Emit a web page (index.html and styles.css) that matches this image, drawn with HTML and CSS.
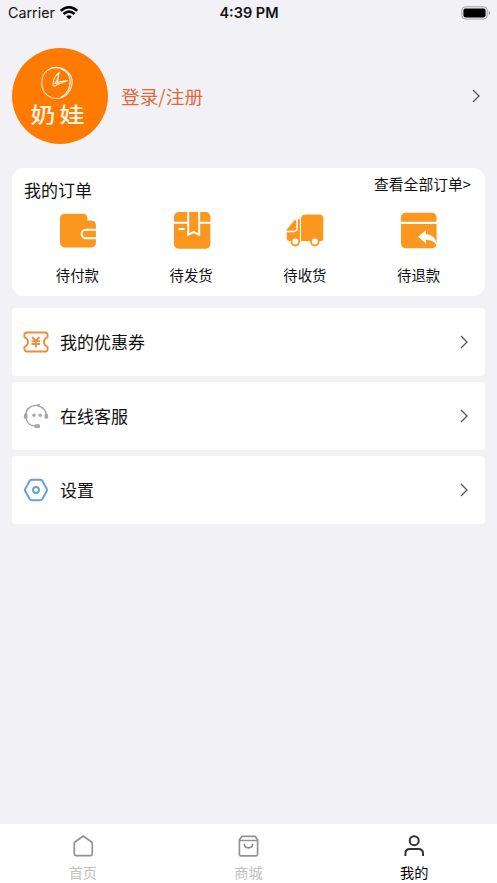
FILE: index.html
```html
<!DOCTYPE html>
<html lang="zh-CN">
<head>
<meta charset="utf-8">
<meta name="viewport" content="width=device-width, initial-scale=1">
<title>我的</title>
<link rel="stylesheet" href="styles.css">
</head>
<body>
<div class="screen">
  <header class="status">
    <div class="carrier"><span>Carrier</span>
      <svg width="18" height="14" viewBox="0 0 18 14" fill="none" stroke="#000" stroke-width="2.6"><path d="M.8 4.800Q9-2.400 17.200 4.800"/><path d="M3.500 8.100Q9 3.300 14.500 8.100"/><path d="M6.200 10.500Q9 8 11.800 10.500L9 13.300Z" fill="#000" stroke="none"/></svg>
    </div>
    <div class="time">4:39 PM</div>
    <div class="battery">
      <svg width="30" height="14" viewBox="0 0 30 14"><rect x=".8" y=".8" width="25.4" height="12.2" rx="3.6" fill="none" stroke="#a0a0a3"/><rect x="2.4" y="2.4" width="22.2" height="9" rx="2" fill="#000"/><path d="M27.6 5v4q1.6-.7 1.6-2t-1.6-2" fill="#a0a0a3"/></svg>
    </div>
  </header>

  <section class="profile">
    <div class="avatar">
      <svg width="34" height="34" viewBox="0 0 34 34" fill="none" stroke="#fff3e2" stroke-width="1.1" stroke-linecap="round" stroke-linejoin="round"><path d="M12 2C4 5 .8 12 2 20c1.500 9 10 14 18 12 9-2.500 13-11 12-18C30.500 5 21-.5 12 2Z"/><path d="M11 2c10-1.500 18 3.500 19 11.500 1 8-3 15-9 18"/><path d="M19.300 6.500c-4 3-6.500 8-6.300 13 1 1.500 3 .5 4.300-1.200 3-1 7-2 10-3.800-4 .3-8.500 1.200-12.300 3.200 2-3 3.300-6.200 4.300-11.200ZM18.300 8l-.6 8"/></svg>
      <span class="brand">奶娃</span>
    </div>
    <span class="login">登录/注册</span>
    <svg class="chevron" width="8" height="14" viewBox="0 0 8 14"><path d="m1 1 6 6-6 6"/></svg>
  </section>

  <section class="orders">
    <div class="orders-head"><h2>我的订单</h2><span class="all">查看全部订单&gt;</span></div>
    <div class="order-types">
      <div class="order-type">
        <svg width="40" height="40" viewBox="0 0 40 40"><path fill="#fb961f" d="M6.5 3.7h18.4a4.5 4.5 0 0 1 4.5 4.5v2.2h4a4.5 4.5 0 0 1 4.5 4.5v18a4.5 4.5 0 0 1-4.5 4.5H6.5A4.5 4.5 0 0 1 2 32.9V8.2a4.5 4.5 0 0 1 4.5-4.5Z"/><path d="M38.5 19.7H28a4.2 4.2 0 0 0 0 8.6h10.5" fill="none" stroke="#fff" stroke-width="2"/></svg>
        <span>待付款</span>
      </div>
      <div class="order-type">
        <svg width="40" height="40" viewBox="0 0 40 40"><rect x="2" y="2" width="36.4" height="36.7" rx="4.8" fill="#fb961f"/><path d="M1 12.8h15.200M27.200 12.800H39M16.200 1v23.600l5.500-2.400 5.500 2.400V1M6.500 19h6" fill="none" stroke="#fff" stroke-width="2"/></svg>
        <span>待发货</span>
      </div>
      <div class="order-type">
        <svg width="40" height="40" viewBox="0 0 40 40"><path fill="#fb961f" d="M20.500 4.500H34.500a3.800 3.800 0 0 1 3.800 3.800v20.200a2.500 2.500 0 0 1-2.500 2.500H16V9q0-4.500 4.500-4.500ZM14.900 9.200V31H4.300a2.500 2.500 0 0 1-2.500-2.500V19.500l7.200-8.800q1.500-1.500 3.500-1.500Z"/><path d="M1.500 21.400h7q3.600 0 3.600-3.600V8.500" fill="none" stroke="#fff" stroke-width="1.500"/><g fill="#fff" stroke="#fb961f" stroke-width="1.800"><circle cx="10.300" cy="31.600" r="3.900"/><circle cx="29.800" cy="31.600" r="3.900"/></g></svg>
        <span>待收货</span>
      </div>
      <div class="order-type">
        <svg width="40" height="40" viewBox="0 0 40 40"><path fill="#fb961f" d="M6.800 2.700h26a4.800 4.800 0 0 1 4.800 4.800v4.200H2V7.500a4.800 4.800 0 0 1 4.800-4.800ZM2 13.900h35.600v19.600a4.800 4.800 0 0 1-4.800 4.800h-26A4.800 4.800 0 0 1 2 33.500Z"/><path fill="#fff" d="m19 26.800 8-6.600v4c6.500.3 10.800 4.500 11.200 12-2.500-4.300-5.700-6.300-11.200-6.500v3.800Z"/></svg>
        <span>待退款</span>
      </div>
    </div>
  </section>

  <nav class="menu">
    <div class="row">
      <svg class="icon" width="26" height="26" viewBox="0 0 26 26" fill="none" stroke="#f08c3c" stroke-width="1.9" stroke-linejoin="round"><path d="M4 3.500h18q2.600 0 2.600 2.600v2q-3.600 1.500-3.600 4.900t3.600 4.900v2q0 2.600-2.600 2.600H4q-2.600 0-2.600-2.600v-2Q5 16.400 5 13T1.400 8.100v-2Q1.400 3.500 4 3.500Z"/><path d="m9.200 8 3.600 4 3.600-4M8.500 12.100h8.600M8.500 15h8.600M12.800 12v6.500"/></svg>
      <span class="label">我的优惠券</span>
      <svg class="chevron" width="8" height="14" viewBox="0 0 8 14"><path d="m1 1 6 6-6 6"/></svg>
    </div>
    <div class="row">
      <svg class="icon" width="26" height="26" viewBox="0 0 26 26" fill="none" stroke="#a8a8a8" stroke-width="1.500"><path d="M2.600 12C3 5.900 8 2.200 12.500 2.500l3.500-.7-.8 1.200c4.500 1 8 4.700 8.200 9M2.800 14c.5 5.600 4.600 9.100 10.200 9.200"/><g fill="#a8a8a8" stroke="none"><rect x=".9" y="10.800" width="3.600" height="5" rx="1.300"/><rect x="21.500" y="10.800" width="3.600" height="5" rx="1.300"/><rect x="11.400" y="21.300" width="5.600" height="3.800" rx="1.300"/><circle cx="11" cy="12.300" r="1.700"/><circle cx="17.200" cy="12.300" r="1.700"/></g></svg>
      <span class="label">在线客服</span>
      <svg class="chevron" width="8" height="14" viewBox="0 0 8 14"><path d="m1 1 6 6-6 6"/></svg>
    </div>
    <div class="row">
      <svg class="icon" width="26" height="26" viewBox="0 0 26 26" fill="none" stroke="#6b9be0" stroke-width="2" stroke-linejoin="round"><path d="M8.600 2.800h8.800q1.200 0 1.800 1l4.500 8q.6 1.200 0 2.400l-4.500 8q-.6 1-1.800 1H8.600q-1.200 0-1.800-1l-4.500-8q-.6-1.200 0-2.400l4.500-8q.6-1 1.800-1Z"/><circle cx="13" cy="13" r="2.900"/></svg>
      <span class="label">设置</span>
      <svg class="chevron" width="8" height="14" viewBox="0 0 8 14"><path d="m1 1 6 6-6 6"/></svg>
    </div>
  </nav>

  <footer class="tabs">
    <div class="tab">
      <svg width="24" height="24" viewBox="0 0 24 24"><path d="M12.300 2 3.700 8.300q-.4.300-.4.900v10.900q0 1.600 1.600 1.600h14.800q1.600 0 1.600-1.600V9.200q0-.6-.4-.9Z"/></svg>
      <span>首页</span>
    </div>
    <div class="tab">
      <svg width="24" height="24" viewBox="0 0 24 24"><path d="M5.900 2.300h13.200l2.500 3.500v14.400q0 1.600-1.600 1.600H5q-1.600 0-1.600-1.600V5.800ZM3.500 6.500h18M8.300 9.800q0 4 4.200 4t4.200-4"/></svg>
      <span>商城</span>
    </div>
    <div class="tab active">
      <svg width="24" height="24" viewBox="0 0 24 24"><circle cx="12.200" cy="6.700" r="4.500"/><path d="M3.400 22v-2.500q0-4.500 4.500-4.500h8.600q4.500 0 4.500 4.500V22"/></svg>
      <span>我的</span>
    </div>
  </footer>
</div>
</body>
</html>
```

FILE: styles.css
```css
* { box-sizing: border-box; }
body {
  margin: 0;
  background: #f2f1f6;
  color: #111;
  font-family: "Noto Sans CJK SC", sans-serif;
}
svg { display: block; flex: none; }
.screen {
  height: 883px;
  display: flex;
  flex-direction: column;
}
.status {
  height: 26px;
  display: grid;
  grid-template-columns: 1fr auto 1fr;
  align-items: center;
  padding: 0 6px 0 8px;
  font: 14.3px/26px Inter, sans-serif;
}
.carrier { display: flex; align-items: center; gap: 5px; }
.time { margin-right: 1px; font-size: 14.5px; font-weight: 600; }
.battery { display: flex; justify-content: flex-end; }
.profile {
  height: 96px;
  margin: 22px 17px 0 12px;
  display: flex;
  align-items: center;
}
.avatar {
  width: 96px;
  height: 96px;
  border-radius: 50%;
  background: #ff7a00;
  display: flex;
  flex-direction: column;
  align-items: center;
  padding-top: 18px;
}
.avatar svg { margin-right: 6px; }
.brand {
  margin-right: 1px;
  font-size: 25px;
  font-weight: 500;
  line-height: 26px;
  letter-spacing: 4px;
  color: #fff3e2;
  transform: scaleY(.84);
}
.login {
  flex: 1;
  margin-left: 13px;
  font-size: 18.7px;
  line-height: 28px;
  color: #de6a3c;
}
.chevron { fill: none; stroke: #555; stroke-width: 1.3; }
.orders {
  height: 128px;
  margin: 24px 12px 0;
  padding-top: 5px;
  background: #fff;
  border-radius: 12px;
}
.orders-head {
  height: 37px;
  display: flex;
  justify-content: space-between;
  padding: 0 14px 0 12px;
}
h2 { margin: 4px 0 0; font-size: 17px; line-height: 26px; font-weight: 400; }
.all { font-size: 14.8px; line-height: 22px; }
.order-types {
  display: grid;
  grid-template-columns: repeat(4, 1fr);
  padding: 0 9px;
}
.order-type {
  display: flex;
  flex-direction: column;
  align-items: center;
  gap: 15px;
  font-size: 14.4px;
  line-height: 20px;
}
.order-type span { margin-right: 1px; }
.menu {
  margin: 12px 12px 0;
  display: flex;
  flex-direction: column;
  gap: 6px;
}
.row {
  height: 68px;
  display: flex;
  align-items: center;
  padding: 0 17px 0 11px;
  background: #fff;
  border-radius: 3px;
}
.label { flex: 1; margin-left: 11px; font-size: 17px; line-height: 26px; }
.tabs {
  height: 59px;
  margin-top: auto;
  display: grid;
  grid-template-columns: repeat(3, 1fr);
  background: #fff;
}
.tab {
  display: flex;
  flex-direction: column;
  align-items: center;
  padding-top: 10px;
  gap: 4px;
  font-size: 14.2px;
  line-height: 20px;
  color: #bfbfbf;
}
.tab svg {
  fill: none;
  stroke: #929292;
  stroke-width: 1.7;
  stroke-linejoin: round;
}
.tab.active { color: #000; }
.tab.active svg { stroke: #333; stroke-width: 2; }
```
